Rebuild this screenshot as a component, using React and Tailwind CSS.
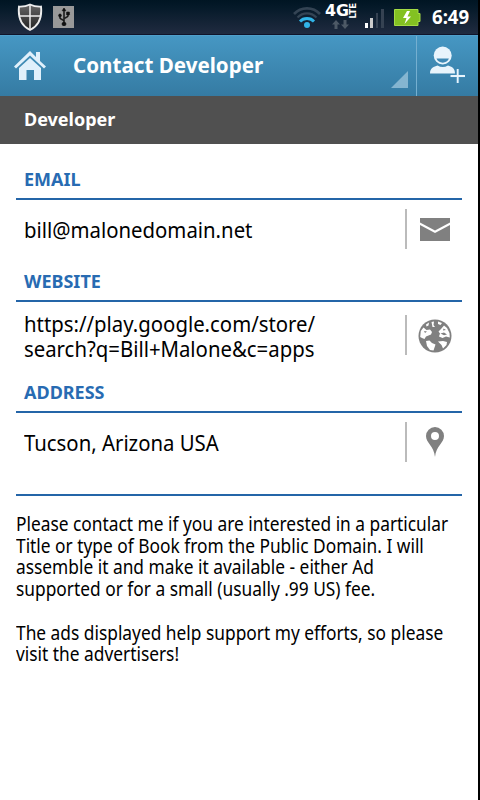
import React from 'react';
import { FaUsb } from 'react-icons/fa';

const ShieldIcon = () => (
    <svg width="26" height="28" viewBox="0 0 26 28">
        <defs>
            <linearGradient id="shield" x1="0" y1="0" x2="0" y2="1">
                <stop offset="0" stopColor="#666" />
                <stop offset="1" stopColor="#222" />
            </linearGradient>
        </defs>
        <path d="M13 1.500C9.500 3.200 5.500 3.800 2 3.600C1 13 3.500 22.500 13 27C22.500 22.500 25 13 24 3.600C20.500 3.800 16.500 3.200 13 1.500Z" fill="url(#shield)" stroke="#ededed" strokeWidth="1.900" />
        <path d="M13 2V26M2.500 13H23.500" stroke="#ededed" strokeWidth="1.500" />
    </svg>
);

const WifiIcon = () => (
    <svg width="30" height="24" viewBox="0 0 30 24" fill="none">
        <path d="M2 9C9 1.500 21 1.500 28 9" stroke="#344454" strokeWidth="2.600" />
        <path d="M5.500 12.500C11 7 19 7 24.500 12.500" stroke="#344454" strokeWidth="2.200" />
        <path d="M8 16.500C11.500 12.500 18.500 12.500 22 16.500" stroke="#31b5e8" strokeWidth="2.800" />
        <circle cx="15" cy="20" r="3" fill="#31b5e8" />
    </svg>
);

const NetworkIcon = () => (
    <svg width="34" height="28" viewBox="0 0 34 28" fill="#fff" className="font-['DejaVu_Sans',sans-serif] font-bold">
        <text x="1" y="13.500" fontSize="16" textLength="24" lengthAdjust="spacingAndGlyphs">4G</text>
        <text transform="translate(32 16.500) rotate(-90)" fontSize="9.500" textLength="15.500" lengthAdjust="spacingAndGlyphs">LTE</text>
        <path d="M12 18L16 22.500H13.500V27H10.500V22.500H8ZM21 27L17 22.500H19.500V18H22.500V22.500H25Z" fill="#4d5966" />
    </svg>
);

const SignalIcon = () => (
    <svg width="20" height="20" viewBox="0 0 20 20">
        <path d="M0 14H3V19H0Z" fill="#fff" />
        <path d="M5 9H8V19H5Z" fill="#ccc" />
        <path d="M11 4H13V19H11ZM16 0H19V19H16Z" fill="#354252" />
    </svg>
);

const BatteryIcon = () => (
    <svg width="27" height="17" viewBox="0 0 27 17">
        <path d="M.5 .5H24V4.500H26V12.500H24V16.500H.5Z" fill="#83c122" stroke="#a4dc45" />
        <path d="M13 2L9 9H12.500L10.500 15L17 7.500H13.500L16 2Z" fill="#fff" />
    </svg>
);

const HomeIcon = () => (
    <svg width="32" height="31" viewBox="0 0 32 31" fill="#e0f0fb">
        <path d="M16 1L22 7V2H26V11L32 16.500L30 18.500L16 5.500L2 18.500L0 16.500Z" />
        <path d="M16 8L27 18V30H20V20H12.500V30H5V18Z" />
    </svg>
);

const AddPersonIcon = () => (
    <svg width="36" height="38" viewBox="0 0 36 38">
        <circle cx="13.700" cy="9.500" r="9" fill="#e8f4fc" />
        <path d="M7.500 12.500H19.900C18.500 18 9 18 7.500 12.500Z" fill="#3f89b5" />
        <path d="M1 27.500C1 22 5 20.500 8.500 19.500C12 21.500 15.500 21.500 19 19.500C22.500 20.500 26 22 26 27.500Z" fill="#e8f4fc" />
        <path d="M28.700 23V37M21.500 30H36" stroke="#3f89b5" strokeWidth="4" />
        <path d="M28.700 23V37M21.500 30H36" stroke="#e8f4fc" strokeWidth="1.900" />
    </svg>
);

const MailIcon = () => (
    <svg width="30" height="24" viewBox="0 0 30 24" fill="#808080" className="mt-[2px]">
        <path d="M0 0H30V4.500L15 12.500L0 4.500Z" />
        <path d="M0 7L15 15L30 7V23H0Z" />
    </svg>
);

const GlobeIcon = () => (
    <svg width="34" height="34" viewBox="0 0 34 34" className="mt-[2px]">
        <circle cx="17" cy="17" r="16.500" fill="#808080" />
        <path d="M2.200 18L2.800 12L5.500 8.500L8.500 11L12 10.500L14 13L13 15.500L8 17.500L6.500 20L4 19ZM8 5.500L11 3.500L10.500 6.500L8.500 7.500ZM13.500 3L16 2.500L15.500 6L17 8L14.500 8ZM20 2.500L24 4L22.500 6L20 5ZM26 6.500L29 9L31.500 14L31.800 18.500L28 17.500L24.500 19L21 17.500L22 14.500L20.500 12.500L23 10ZM8 22L11.500 21.500L14 24L17.500 25.500L15.500 31.500L12 31L9 27ZM20 22.500L25 22L29 23L28.500 26L25 29.500L23.500 26Z" fill="#fff" />
        <path d="M22.500 14.500L26 13.500L29 15.500L26 16.200ZM6 12L9 12.500L7 14ZM25.500 9.500L28 11L25 11.500Z" fill="#808080" />
    </svg>
);

const PinIcon = () => (
    <svg width="18" height="31" viewBox="0 0 18 31">
        <path fillRule="evenodd" d="M9 0A9 9 0 0 1 18 9C18 16 10 19 9 30C8 19 0 16 0 9A9 9 0 0 1 9 0ZM9 5A4 4 0 1 0 9 13A4 4 0 1 0 9 5Z" fill="#808080" />
    </svg>
);

const contactRows = [
    { label: 'EMAIL', value: 'bill@malonedomain.net', icon: <MailIcon />, height: 'h-[102px]', rowHeight: 'h-[58px]' },
    { label: 'WEBSITE', value: 'https://play.google.com/store/\nsearch?q=Bill+Malone&c=apps', icon: <GlobeIcon />, height: 'h-[111px]', rowHeight: 'h-[66px]', valueClass: 'mt-[2px]' },
    { label: 'ADDRESS', value: 'Tucson, Arizona USA', icon: <PinIcon />, height: 'h-[112px]', rowHeight: 'h-[58px]' },
];

const about = `Please contact me if you are interested in a particular
Title or type of Book from the Public Domain. I will
assemble it and make it available - either Ad
supported or for a small (usually .99 US) fee.

The ads displayed help support my efforts, so please
visit the advertisers!`;

const StatusBar = () => (
    <div className="flex h-[35px] items-start border-b border-[#10142a] bg-linear-to-b from-[#001523] to-[#202b40] text-white">
        <div className="ml-[17px] mt-[3px]"><ShieldIcon /></div>
        <div className="ml-[10px] mt-[6px] flex h-[22px] w-[21px] items-center justify-center bg-[#999] text-[#111]">
            <FaUsb size={18} className="-rotate-90 stroke-current stroke-[18px]" />
        </div>
        <div className="ml-[218px] mt-[5px]"><WifiIcon /></div>
        <div className="ml-[2px] mt-[2px]"><NetworkIcon /></div>
        <div className="ml-[7px] mt-[9px]"><SignalIcon /></div>
        <div className="ml-[9px] mt-[9px]"><BatteryIcon /></div>
        <span className="ml-[11px] mt-[3px] origin-left scale-x-[.93] text-[20px] leading-[28px] font-bold">6:49</span>
    </div>
);

const ActionBar = () => (
    <header className="flex h-[61px] border-t border-[#4f9fca] bg-linear-to-b from-[#4697c3] to-[#357ba3] text-white">
        <div className="ml-[14px] mt-[14px]"><HomeIcon /></div>
        <h1 className="ml-[27px] mt-[15px] w-[318px] text-[20.600px] leading-[28px] font-bold">Contact Developer</h1>
        <svg width="17" height="17" viewBox="0 0 17 17" className="mt-[35px]">
            <path d="M17 0V17H0Z" fill="#85b5d0" />
        </svg>
        <div className="ml-[8px] w-px bg-[#75afd0]" />
        <div className="ml-[12px] mt-[10px]"><AddPersonIcon /></div>
    </header>
);

const ContactRow = ({ label, value, icon, height, rowHeight, valueClass = '' }) => (
    <section className={height}>
        <h2 className="h-[31px] border-b-2 border-[#2465a8] pl-2 text-[18px] leading-[20px] font-bold text-[#286bb2]">{label}</h2>
        <div className={`flex items-center ${rowHeight}`}>
            <div className={`ml-2 w-[381px] origin-left scale-x-[.946] text-[21.500px] leading-[25px] whitespace-pre ${valueClass}`}>{value}</div>
            <div className="h-10 w-[1.500px] bg-[#bbb]" />
            <div className="flex flex-1 justify-center pl-px">{icon}</div>
        </div>
    </section>
);

export default function App() {
    return (
        <div className="h-[800px] w-[480px] overflow-hidden bg-black pr-[2.500px] font-['Noto_Sans',sans-serif]">
            <div className="h-full bg-white text-black">
                <StatusBar />
                <ActionBar />
                <div className="h-[48px] bg-[#505050] pl-6 text-[18px] leading-[47px] font-bold text-white">Developer</div>
                <main className="w-[462px] pt-[25px] pl-4">
                    {contactRows.map((row) => <ContactRow key={row.label} {...row} />)}
                    <div className="border-t-2 border-[#2465a8] pt-[18px]">
                        <p className="origin-left scale-x-[.912] text-[19px] leading-[21.700px] whitespace-pre">{about}</p>
                    </div>
                </main>
            </div>
        </div>
    );
}
